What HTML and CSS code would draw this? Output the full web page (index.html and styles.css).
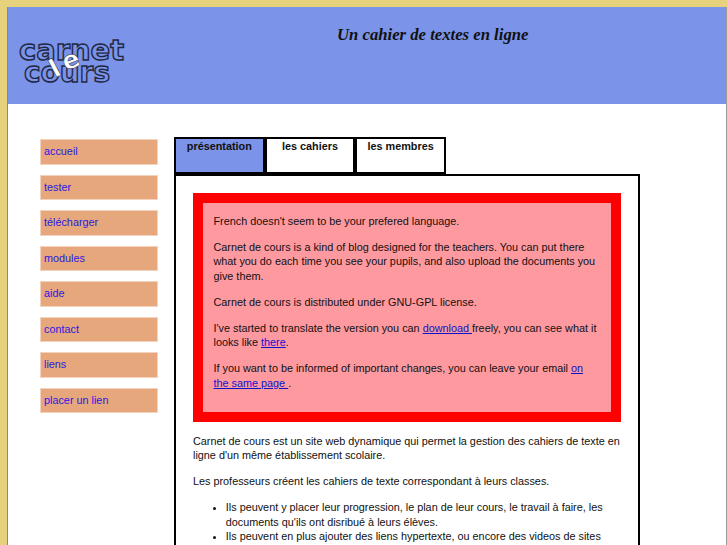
FILE: index.html
```html
<!DOCTYPE html>
<html lang="fr">
<head>
<meta charset="utf-8">
<title>Carnet de cours</title>
<link rel="stylesheet" href="styles.css">
</head>
<body>
<div class="page">
  <header class="banner">
    <svg class="logo" width="110" height="56" viewBox="0 0 110 56">
      <text class="logo-word" x="0" y="23" textLength="105" lengthAdjust="spacingAndGlyphs">carnet</text>
      <text class="logo-word" x="5" y="45" textLength="86" lengthAdjust="spacingAndGlyphs">cours</text>
      <text class="logo-le" transform="translate(36 41) rotate(-28)">l</text>
      <text class="logo-le" transform="translate(47 34) rotate(-22)">e</text>
    </svg>
    <h1 class="slogan">Un cahier de textes en ligne</h1>
  </header>
  <div class="columns">
    <nav class="menu">
      <a class="menu-item" href="#">accueil</a>
      <a class="menu-item" href="#">tester</a>
      <a class="menu-item" href="#">télécharger</a>
      <a class="menu-item" href="#">modules</a>
      <a class="menu-item" href="#">aide</a>
      <a class="menu-item" href="#">contact</a>
      <a class="menu-item" href="#">liens</a>
      <a class="menu-item" href="#">placer un lien</a>
    </nav>
    <main class="content">
      <div class="tabs">
        <div class="tab tab-active">présentation</div>
        <div class="tab">les cahiers</div>
        <div class="tab">les membres</div>
      </div>
      <section class="panel">
        <div class="notice">
          <p>French doesn't seem to be your prefered language.</p>
          <p>Carnet de cours is a kind of blog designed for the teachers. You can put there what you do each time you see your pupils, and also upload the documents you give them.</p>
          <p>Carnet de cours is distributed under GNU-GPL license.</p>
          <p>I've started to translate the version you can <a href="#">download </a>freely, you can see what it looks like <a href="#">there</a>.</p>
          <p>If you want to be informed of important changes, you can leave your email <a href="#">on the same page </a>.</p>
        </div>
        <p>Carnet de cours est un site web dynamique qui permet la gestion des cahiers de texte en ligne d'un même établissement scolaire.</p>
        <p>Les professeurs créent les cahiers de texte correspondant à leurs classes.</p>
        <ul>
          <li>Ils peuvent y placer leur progression, le plan de leur cours, le travail à faire, les documents qu'ils ont disribué à leurs élèves.</li>
          <li>Ils peuvent en plus ajouter des liens hypertexte, ou encore des videos de sites</li>
        </ul>
      </section>
    </main>
  </div>
</div>
</body>
</html>
```
FILE: styles.css
```css
html, body {
  margin: 0;
  height: 545px;
  overflow: hidden;
}
body {
  background: #e6d27c;
  font-family: "Liberation Sans", Arial, sans-serif;
  font-size: 10.83px;
  line-height: 14.6px;
  color: #111;
}
.page {
  margin: 7px 0 0 7px;
  height: 538px;
  box-sizing: border-box;
  background: #fff;
  border-left: 1px solid #8a8a7a;
  border-right: 1px solid #999;
  overflow: hidden;
}
.banner {
  height: 97px;
  background: #7b93e8;
  display: flex;
  box-sizing: border-box;
  padding: 30px 0 0 11px;
}
.logo {
  flex: none;
  overflow: visible;
}
.logo-word {
  font-family: "DejaVu Sans", sans-serif;
  font-weight: bold;
  font-size: 29px;
  fill: #7b93e8;
  stroke: #1f2844;
  stroke-width: 1.4px;
}
.logo-le {
  font-family: "DejaVu Sans", sans-serif;
  font-weight: bold;
  font-size: 25px;
  fill: #fff;
  stroke: #1f2844;
  stroke-width: .5px;
}
.slogan {
  margin: -12px 0 0 208px;
  font-family: "Liberation Serif", "Times New Roman", serif;
  font-style: italic;
  font-weight: bold;
  font-size: 16.7px;
  line-height: 20px;
  color: #111;
  white-space: nowrap;
}
.columns {
  display: flex;
  padding: 33px 0 0 32px;
  align-items: flex-start;
}
.menu {
  width: 118px;
  flex: none;
  display: flex;
  flex-direction: column;
  gap: 10.2px;
  margin: 2.3px 16px 0 0;
}
.menu-item {
  display: block;
  height: 25.3px;
  box-sizing: border-box;
  padding: 5px 0 0 4px;
  background: #e6a77d;
  outline: 1px solid #f3d3bd;
  outline-offset: -1px;
  color: #2a1ae0;
  text-decoration: none;
}
.content {
  width: 466px;
  flex: none;
}
.tabs {
  display: flex;
  height: 37.3px;
}
.tab {
  width: 90.67px;
  box-sizing: border-box;
  border: 2.3px solid #000;
  text-align: center;
  font-weight: bold;
  background: #fff;
}
.tab-active { background: #7b93e8; }
.panel {
  border: 2.3px solid #000;
  padding: 16.5px 17px 0 17px;
  box-sizing: border-box;
  height: 400px;
  background: #fff;
}
.notice {
  border: 10.5px solid #f00;
  background: #ff99a0;
  padding: 11px 10.2px 22px 10.5px;
  margin-bottom: 11.4px;
}
.panel p {
  margin: 0 0 11.3px;
}
.notice p:last-child { margin-bottom: 0; }
.panel a { color: #11c; }
.panel ul {
  margin: 0;
  padding-left: 32.8px;
}
```
